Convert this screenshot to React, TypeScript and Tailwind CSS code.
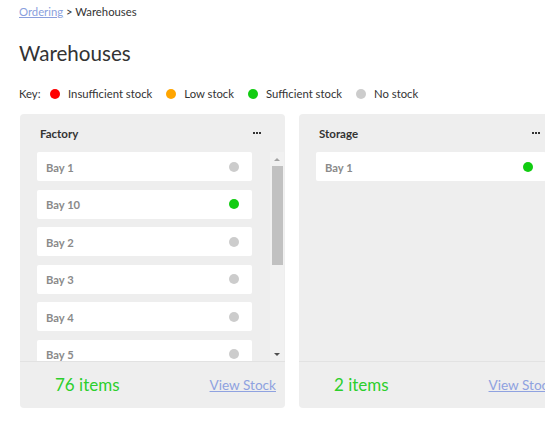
import React from "react";

type Bay = { name: string; status: "none" | "ok" | "low" | "bad" };

const dotColor: Record<Bay["status"], string> = {
  none: "bg-[#cccccc]",
  ok: "bg-[#11cc11]",
  low: "bg-[#ffa500]",
  bad: "bg-[#ff0000]",
};

function Dots() {
  return (
    <div className="flex gap-[1px]">
      <span className="w-[2px] h-[2px] bg-[#333]" />
      <span className="w-[2px] h-[2px] bg-[#333]" />
      <span className="w-[2px] h-[2px] bg-[#333]" />
    </div>
  );
}

function Row({ bay }: { bay: Bay }) {
  return (
    <div className="h-[29px] shrink-0 bg-white rounded-[2px] flex items-center justify-between pl-[9px] pr-[13px]">
      <span className="text-[11.2px] leading-[14px] pt-[2px] font-bold text-[#8a8a8a]">{bay.name}</span>
      <span className={`w-[10px] h-[10px] rounded-full ${dotColor[bay.status]}`} />
    </div>
  );
}

function Scrollbar() {
  return (
    <div className="w-[14px] mr-[1px] bg-[#f1f1f1] flex flex-col items-center">
      <div className="h-[14px] flex items-center justify-center">
        <div className="w-0 h-0 border-l-[3px] border-r-[3px] border-b-[3px] border-l-transparent border-r-transparent border-b-[#a3a3a3]" />
      </div>
      <div className="w-[11px] h-[99px] bg-[#c1c1c1]" />
      <div className="flex-1" />
      <div className="h-[14px] flex items-center justify-center">
        <div className="w-0 h-0 border-l-[3px] border-r-[3px] border-t-[3px] border-l-transparent border-r-transparent border-t-[#505050]" />
      </div>
    </div>
  );
}

function Card({ title, bays, count, scroll }: { title: string; bays: Bay[]; count: string; scroll?: boolean }) {
  return (
    <div className="w-[265px] shrink-0 h-[294px] bg-[#eeeeee] rounded-[4px] flex flex-col">
      <div className="h-[38px] flex items-center justify-between pl-[20px] pr-[24px]">
        <span className="text-[11.5px] pt-[1px] font-bold text-[#333]">{title}</span>
        <Dots />
      </div>
      <div className="h-[209px] flex">
        <div className="flex-1 pl-[17px] pr-[18px] flex flex-col gap-[8.6px] overflow-hidden">
          {bays.map((b) => (
            <Row key={b.name} bay={b} />
          ))}
        </div>
        {scroll && <Scrollbar />}
      </div>
      <div className="h-[47px] border-t border-[#e2e2e2] flex items-center justify-between pl-[35px] pr-[9px]">
        <span className="text-[17px] leading-[22px] text-[#2ccf2c]">{count}</span>
        <a href="#" className="text-[13.6px] leading-[20px] text-[#8fa2e0] underline">View Stock</a>
      </div>
    </div>
  );
}

export default function App() {
  const factory: Bay[] = [
    { name: "Bay 1", status: "none" },
    { name: "Bay 10", status: "ok" },
    { name: "Bay 2", status: "none" },
    { name: "Bay 3", status: "none" },
    { name: "Bay 4", status: "none" },
    { name: "Bay 5", status: "none" },
  ];
  const storage: Bay[] = [{ name: "Bay 1", status: "ok" }];
  const key: { label: string; c: string }[] = [
    { label: "Insufficient stock", c: "bg-[#ff0000]" },
    { label: "Low stock", c: "bg-[#ffa500]" },
    { label: "Sufficient stock", c: "bg-[#11cc11]" },
    { label: "No stock", c: "bg-[#cccccc]" },
  ];
  return (
    <div className="w-[545px] h-[429px] overflow-hidden bg-white text-[#333] font-['Lato',sans-serif]">
      <div className="pl-[19px] pt-[4px] text-[11.3px] leading-[16px]">
        <a href="#" className="text-[#8a9fdd] underline">Ordering</a>
        <span> &gt; Warehouses</span>
      </div>
      <h1 className="pl-[19px] mt-[19px] text-[20.6px] leading-[28px] font-normal text-[#333]">Warehouses</h1>
      <div className="pl-[19px] mt-[19px] h-[16px] flex items-center text-[11.3px] text-[#333]">
        <span className="w-[31px]">Key:</span>
        {key.map((k) => (
          <div key={k.label} className="flex items-center mr-[14px]">
            <span className={`w-[10px] h-[10px] rounded-full ${k.c} mr-[8px]`} />
            <span>{k.label}</span>
          </div>
        ))}
      </div>
      <div className="mt-[12px] pl-[20px] flex gap-[14px]">
        <Card title="Factory" bays={factory} count="76 items" scroll />
        <Card title="Storage" bays={storage} count="2 items" />
      </div>
    </div>
  );
}
